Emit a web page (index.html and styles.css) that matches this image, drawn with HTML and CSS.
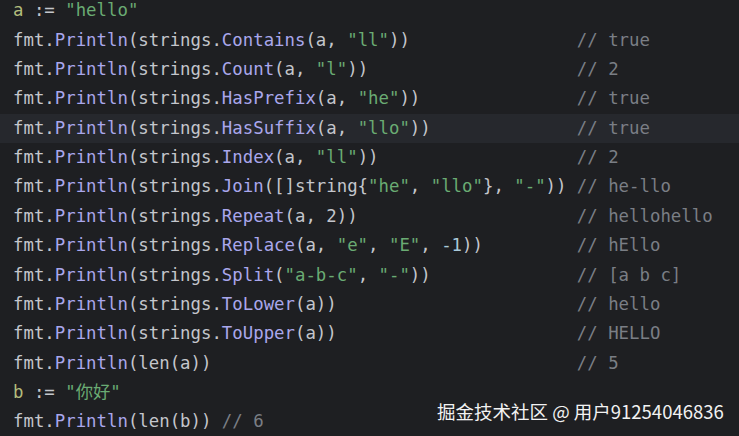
FILE: index.html
```html
<!DOCTYPE html>
<html lang="zh">
<head>
<meta charset="utf-8">
<link rel="stylesheet" href="styles.css">
</head>
<body>
<div class="editor">
  <div class="line"><span class="code"><span class="v">a</span> := <span class="s">"hello"</span></span></div>
  <div class="line"><span class="code">fmt.<span class="f">Println</span>(strings.<span class="f">Contains</span>(a, <span class="s">"ll"</span>))</span><span class="c">// true</span></div>
  <div class="line"><span class="code">fmt.<span class="f">Println</span>(strings.<span class="f">Count</span>(a, <span class="s">"l"</span>))</span><span class="c">// 2</span></div>
  <div class="line"><span class="code">fmt.<span class="f">Println</span>(strings.<span class="f">HasPrefix</span>(a, <span class="s">"he"</span>))</span><span class="c">// true</span></div>
  <div class="line current"><span class="code">fmt.<span class="f">Println</span>(strings.<span class="f">HasSuffix</span>(a, <span class="s">"llo"</span>))</span><span class="c">// true</span></div>
  <div class="line"><span class="code">fmt.<span class="f">Println</span>(strings.<span class="f">Index</span>(a, <span class="s">"ll"</span>))</span><span class="c">// 2</span></div>
  <div class="line"><span class="code">fmt.<span class="f">Println</span>(strings.<span class="f">Join</span>([]string{<span class="s">"he"</span>, <span class="s">"llo"</span>}, <span class="s">"-"</span>))</span><span class="c">// he-llo</span></div>
  <div class="line"><span class="code">fmt.<span class="f">Println</span>(strings.<span class="f">Repeat</span>(a, 2))</span><span class="c">// hellohello</span></div>
  <div class="line"><span class="code">fmt.<span class="f">Println</span>(strings.<span class="f">Replace</span>(a, <span class="s">"e"</span>, <span class="s">"E"</span>, <span class="n">-1</span>))</span><span class="c">// hEllo</span></div>
  <div class="line"><span class="code">fmt.<span class="f">Println</span>(strings.<span class="f">Split</span>(<span class="s">"a-b-c"</span>, <span class="s">"-"</span>))</span><span class="c">// [a b c]</span></div>
  <div class="line"><span class="code">fmt.<span class="f">Println</span>(strings.<span class="f">ToLower</span>(a))</span><span class="c">// hello</span></div>
  <div class="line"><span class="code">fmt.<span class="f">Println</span>(strings.<span class="f">ToUpper</span>(a))</span><span class="c">// HELLO</span></div>
  <div class="line"><span class="code">fmt.<span class="f">Println</span>(len(a))</span><span class="c">// 5</span></div>
  <div class="line"><span class="code"><span class="v">b</span> := <span class="s">"你好"</span></span></div>
  <div class="line">fmt.<span class="f">Println</span>(len(b)) <span class="c">// 6</span></div>
</div>
<div class="watermark">掘金技术社区 @ 用户91254046836</div>
</body>
</html>
```
FILE: styles.css
```css
html, body {
  margin: 0;
  padding: 0;
  background: #1e1f22;
  overflow: hidden;
}
body {
  width: 739px;
  height: 436px;
  position: relative;
}
.editor {
  margin-top: -3.7px;
  font-family: "DejaVu Sans Mono", "Noto Sans CJK SC", monospace;
  font-size: 17.35px;
  line-height: 29.36px;
  color: #c4c6cc;
}
.line {
  white-space: pre;
  padding-left: 13px;
  height: 29.36px;
}
.line.current {
  background: #26282d;
}
.code {
  display: inline-block;
  width: 54ch;
}
.v { color: #b3bd7c; }
.s { color: #6aab73; }
.f { color: #aaa7ec; }
.c { color: #7a7e85; }
.n { color: #a9c9d9; }
.watermark {
  position: absolute;
  left: 437px;
  top: 398px;
  font-family: "Noto Sans CJK SC", "Noto Sans", sans-serif;
  font-size: 18.5px;
  line-height: 26px;
  color: #f2f2f2;
  white-space: nowrap;
}
```
